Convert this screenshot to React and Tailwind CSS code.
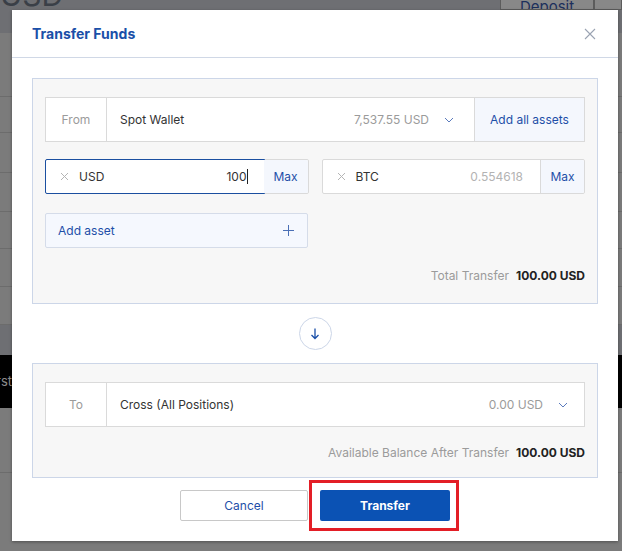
import React from "react";

const Chevron = () => (
  <svg width="10" height="6" viewBox="0 0 10 6" fill="none">
    <path d="M1 1l4 4 4-4" stroke="#5b7bbd" strokeWidth="1" />
  </svg>
);

const SmallX = () => (
  <svg width="9" height="9" viewBox="0 0 9 9" fill="none">
    <path d="M1 1l7 7M8 1l-7 7" stroke="#b5b5b5" strokeWidth="1" />
  </svg>
);

function BgRow({ h }) {
  return <div className="border-b border-[#6c6c6c]" style={{ height: h }} />;
}

export default function App() {
  return (
    <div
      className="relative w-[622px] h-[551px] overflow-hidden bg-[#7b7b7b]"
      style={{ fontFamily: "Inter, 'Noto Sans', sans-serif" }}
    >
      {/* dimmed background page */}
      <div className="flex flex-col">
        <div className="h-[33px] bg-[#6e6f73] flex justify-between items-start overflow-hidden">
          <div className="text-[30px] leading-none -mt-[20px] text-[#3a3f47]">USD</div>
          <div className="flex h-[11px] -mt-[1px]">
            <div className="w-[94px] border border-[#5c5c5c] bg-[#888888] text-[#1c2f5c] text-[15px] leading-none flex justify-center items-end overflow-hidden">
              <span className="-mb-[5px]">Deposit</span>
            </div>
            <div className="w-[28px] border border-[#5c5c5c] bg-[#888888]" />
          </div>
        </div>
        <BgRow h={64} />
        <BgRow h={36} />
        <BgRow h={40} />
        <BgRow h={39} />
        <BgRow h={37} />
        <BgRow h={38} />
        <BgRow h={38} />
        <div className="h-[30px] bg-[#6e6f73]" />
        <div className="h-[53px] bg-black flex items-center">
          <span className="text-[13px] text-[#8c8c8c] -ml-[4px]">rst</span>
        </div>
        <BgRow h={65} />
      </div>

      {/* modal */}
      <div className="absolute left-[12px] top-[10px] w-[606px] h-[531px] bg-white shadow-[0_1px_3px_rgba(0,0,0,0.35)] flex flex-col">
        <div className="h-[48px] shrink-0 border-b border-[#d0d8e6] flex items-center justify-between pl-[20px] pr-[22px]">
          <div className="text-[14px] font-bold text-[#1a4fa8]">Transfer Funds</div>
          <svg width="12" height="12" viewBox="0 0 12 12" fill="none">
            <path d="M1 1l10 10M11 1L1 11" stroke="#9aa3b2" strokeWidth="1.1" />
          </svg>
        </div>

        <div className="px-[20px] pt-[20px] flex flex-col">
          {/* from panel */}
          <div className="h-[226px] border border-[#ccd6e8] bg-[#f7f7f7] px-[12px] pt-[18px] flex flex-col text-[12px]">
            <div className="h-[45px] border border-[#dadada] bg-white flex">
              <div className="w-[61px] border-r border-[#dadada] flex items-center justify-center text-[#9b9b9b]">From</div>
              <div className="flex-1 flex items-center pl-[13px] pr-[20px] text-[#333]">
                <span className="flex-1">Spot Wallet</span>
                <span className="text-[#9b9b9b] mr-[15px]">7,537.55 USD</span>
                <Chevron />
              </div>
              <div className="w-[110px] border-l border-[#dadada] bg-[#f4f7fd] flex items-center justify-center text-[#1e4fa8]">Add all assets</div>
            </div>

            <div className="mt-[17px] grid grid-cols-2 gap-[13px] h-[35px]">
              <div className="flex rounded-[2px] border border-[#dadada] bg-white">
                <div className="flex-1 flex items-center pl-[14px] pr-[16px] border border-[#1b4fa0] -m-px rounded-l-[2px] bg-white">
                  <SmallX />
                  <span className="ml-[10px] flex-1 text-[#333]">USD</span>
                  <span className="text-[#333]">100</span>
                  <span className="w-px h-[15px] bg-[#222]" />
                </div>
                <div className="w-[44px] bg-[#f4f7fd] flex items-center justify-center text-[#1e4fa8] rounded-r-[2px]">Max</div>
              </div>
              <div className="flex rounded-[2px] border border-[#dadada] bg-white">
                <div className="flex-1 flex items-center pl-[14px] pr-[17px]">
                  <SmallX />
                  <span className="ml-[10px] flex-1 text-[#333]">BTC</span>
                  <span className="text-[#b3b3b3]">0.554618</span>
                </div>
                <div className="w-[44px] border-l border-[#dadada] bg-[#f4f7fd] flex items-center justify-center text-[#1e4fa8] rounded-r-[2px]">Max</div>
              </div>
            </div>

            <div className="mt-[19px] w-[263px] h-[35px] rounded-[2px] border border-[#d5dce9] bg-[#f5f8fe] flex items-center justify-between pl-[12px] pr-[13px] text-[#1e4fa8]">
              <span>Add asset</span>
              <svg width="11" height="11" viewBox="0 0 11 11" fill="none">
                <path d="M5.5 0v11M0 5.5h11" stroke="#4a6fb5" strokeWidth="1" />
              </svg>
            </div>

            <div className="mt-[19px] flex justify-end items-center">
              <span className="text-[#9b9b9b]">Total Transfer</span>
              <span className="ml-[7px] font-bold text-[#222]">100.00 USD</span>
            </div>
          </div>

          {/* arrow */}
          <div className="flex justify-center my-[13px]">
            <div className="w-[33px] h-[33px] rounded-full border border-[#ccd6e8] bg-white flex items-center justify-center">
              <svg width="10" height="12" viewBox="0 0 10 12" fill="none">
                <path d="M5 0.5v10M1.5 7l3.5 3.5L8.5 7" stroke="#1a4fa8" strokeWidth="1.3" />
              </svg>
            </div>
          </div>

          {/* to panel */}
          <div className="h-[115px] border border-[#ccd6e8] bg-[#f7f7f7] px-[12px] pt-[18px] flex flex-col text-[12px]">
            <div className="h-[45px] border border-[#dadada] bg-white flex">
              <div className="w-[61px] border-r border-[#dadada] flex items-center justify-center text-[#9b9b9b]">To</div>
              <div className="flex-1 flex items-center pl-[13px] pr-[16px] text-[#333]">
                <span className="flex-1">Cross (All Positions)</span>
                <span className="text-[#9b9b9b] mr-[15px]">0.00 USD</span>
                <Chevron />
              </div>
            </div>
            <div className="mt-[17px] flex justify-end items-center">
              <span className="text-[#9b9b9b]">Available Balance After Transfer</span>
              <span className="ml-[7px] font-bold text-[#222]">100.00 USD</span>
            </div>
          </div>

          {/* buttons */}
          <div className="mt-[12px] flex justify-center gap-[12px] text-[12px]">
            <button className="w-[128px] h-[31px] border border-[#c8c8c8] rounded-[2px] bg-white text-[#1e4fa8]">Cancel</button>
            <div className="relative">
              <button className="w-[130px] h-[31px] rounded-[2px] bg-[#0b52b4] text-white font-bold">Transfer</button>
              <div className="absolute -left-[11px] -top-[10px] -right-[9px] -bottom-[10px] border-[3px] border-[#e31e26] pointer-events-none" />
            </div>
          </div>
        </div>
      </div>
    </div>
  );
}
